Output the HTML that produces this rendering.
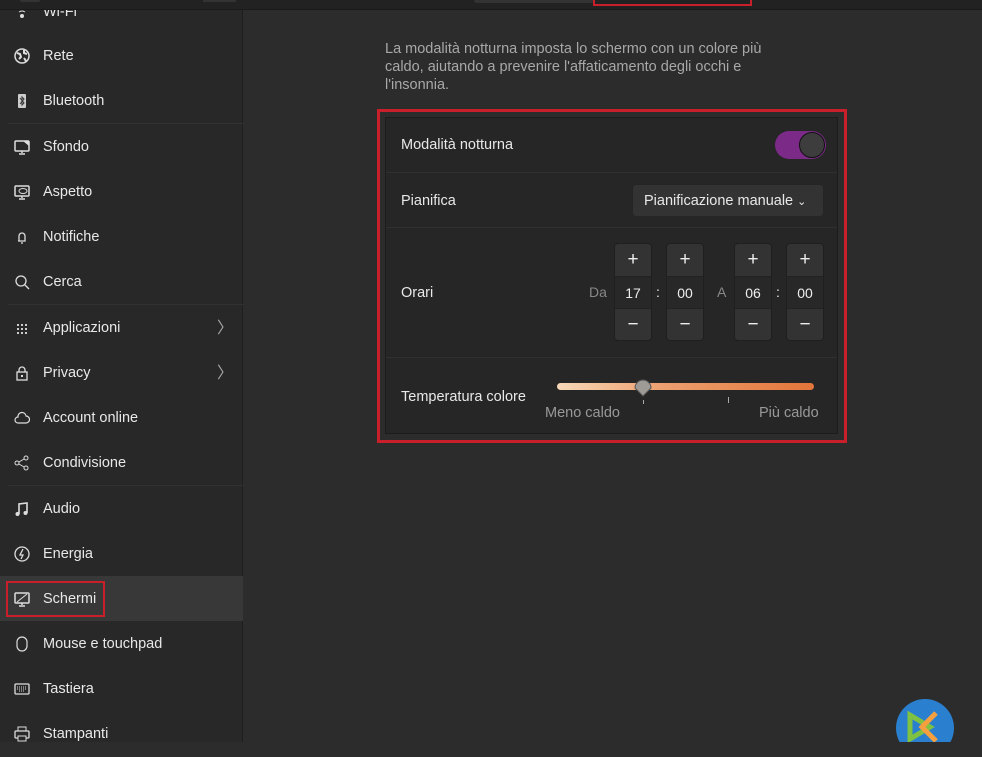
<!DOCTYPE html>
<html><head><meta charset="utf-8">
<style>
*{margin:0;padding:0;box-sizing:border-box}
body{width:982px;height:742px;overflow:hidden;background:#2c2c2c;font-family:"Liberation Sans",sans-serif;font-size:14px;color:#e8e8e8;position:relative}
.abs{position:absolute}
#top{left:0;top:0;width:982px;height:10px;background:#222;border-bottom:1px solid #1a1a1a;z-index:2}
#side{left:0;top:10px;width:243px;height:732px;background:#282828;border-right:1px solid #1e1e1e}
.it{position:absolute;left:0;width:243px;height:45px;line-height:45px;font-size:14.5px}
.it span{position:absolute;left:43px;top:0}
.it svg{position:absolute;left:14px;top:14px}
.sep{position:absolute;left:8px;width:235px;height:1px;background:#323232}
.chev{position:absolute;left:217px;top:0;color:#aaa;font-size:16px}
#card{left:385px;top:117px;width:453px;height:317px;background:#262626;border:1px solid #1c1c1c}
.lbl{position:absolute;left:15px;font-size:14.5px}
.rs{position:absolute;left:0;width:451px;height:1px;background:#303030}
.sp{position:absolute;top:125px;width:38px;height:98px;border-radius:4px;background:#333;border:1px solid #1f1f1f;overflow:hidden}
.sp div{height:32px;line-height:32px;text-align:center;color:#eee}
.sp .v{background:#282828;height:33px;line-height:33px;font-size:14px;border-top:1px solid #222;border-bottom:1px solid #222}
.sp .b{font-size:19px}
</style></head><body>
<div id="top" class="abs"></div>
<div class="abs" style="left:20px;top:0;width:20px;height:2px;background:#333;border-radius:0 0 3px 3px;z-index:3"></div>
<div class="abs" style="left:203px;top:0;width:33px;height:2px;background:#333;z-index:3"></div>
<div class="abs" style="left:474px;top:0;width:120px;height:3px;background:#333;border-radius:0 0 4px 4px;z-index:3"></div>
<div class="abs" style="left:593px;top:0;width:159px;height:6px;border:2px solid #c8202a;border-top:none;z-index:3"></div>
<div id="side" class="abs">
 <div class="it" style="top:-20px"><svg width="16" height="16"><circle cx="8" cy="12" r="2" fill="#ddd"/><path d="M5 8 Q8 6 11 8" stroke="#ddd" fill="none"/></svg><span>Wi-Fi</span></div>
 <div class="it" style="top:24px"><svg width="16" height="16"><circle cx="8" cy="8" r="7" stroke="#ddd" stroke-width="1.5" fill="none"/><path d="M3 5 l3 1 1 3 -2 2 M10 2 l0 3 3 1 M10 10 l2 3" stroke="#ddd" stroke-width="2" fill="none"/></svg><span>Rete</span></div>
 <div class="it" style="top:69px"><svg width="16" height="16"><rect x="4" y="1" width="8" height="14" rx="1" fill="#ccc"/><path d="M6 5 l4 5 -2 2 0-8 2 2 -4 5" stroke="#333" fill="none"/></svg><span>Bluetooth</span></div>
 <div class="sep" style="top:113px"></div>
 <div class="it" style="top:115px"><svg width="16" height="16"><rect x="1" y="2" width="14" height="10" rx="1" stroke="#ddd" stroke-width="1.5" fill="none"/><path d="M9 2 h6 v5z" fill="#ddd"/><path d="M8 12v2M5 15h6" stroke="#ddd" stroke-width="1.5"/></svg><span>Sfondo</span></div>
 <div class="it" style="top:160px"><svg width="16" height="16"><rect x="1" y="2" width="14" height="10" rx="1" stroke="#ddd" stroke-width="1.5" fill="none"/><ellipse cx="9" cy="7" rx="4" ry="2.5" stroke="#ddd" fill="none"/><path d="M8 12v2M5 15h6" stroke="#ddd" stroke-width="1.5"/></svg><span>Aspetto</span></div>
 <div class="it" style="top:205px"><svg width="16" height="16"><path d="M5 12 V7 a3 3 0 0 1 6 0 V12 H4 M7 14 h2" stroke="#ddd" stroke-width="1.3" fill="none"/></svg><span>Notifiche</span></div>
 <div class="it" style="top:250px"><svg width="16" height="16"><circle cx="7" cy="7" r="5" stroke="#ddd" stroke-width="1.3" fill="none"/><path d="M11 11 l4 4" stroke="#ddd" stroke-width="1.3"/></svg><span>Cerca</span></div>
 <div class="sep" style="top:294px"></div>
 <div class="it" style="top:296px"><svg width="16" height="16" fill="#ccc"><rect x="3" y="4" width="2" height="2"/><rect x="7" y="4" width="2" height="2"/><rect x="11" y="4" width="2" height="2"/><rect x="3" y="8" width="2" height="2"/><rect x="7" y="8" width="2" height="2"/><rect x="11" y="8" width="2" height="2"/><rect x="3" y="12" width="2" height="2"/><rect x="7" y="12" width="2" height="2"/><rect x="11" y="12" width="2" height="2"/></svg><span>Applicazioni</span><div class="chev">〉</div></div>
 <div class="it" style="top:341px"><svg width="16" height="16"><rect x="3" y="7" width="10" height="8" stroke="#ddd" stroke-width="1.3" fill="none"/><path d="M5 7 V5 a3 3 0 0 1 6 0 V7" stroke="#ddd" stroke-width="1.3" fill="none"/><rect x="7" y="10" width="2" height="2" fill="#ddd"/></svg><span>Privacy</span><div class="chev">〉</div></div>
 <div class="it" style="top:386px"><svg width="16" height="16"><path d="M4 13 a3 3 0 0 1 0-6 a4 4 0 0 1 8-1 a3.5 3.5 0 0 1 0 7z" stroke="#ddd" stroke-width="1.2" fill="none"/></svg><span>Account online</span></div>
 <div class="it" style="top:431px"><svg width="16" height="16"><circle cx="3" cy="8" r="2" stroke="#ddd" fill="none"/><circle cx="12" cy="3" r="2" stroke="#ddd" fill="none"/><circle cx="12" cy="13" r="2" stroke="#ddd" fill="none"/><path d="M5 7 L10 4 M5 9 L10 12" stroke="#ddd"/></svg><span>Condivisione</span></div>
 <div class="sep" style="top:475px"></div>
 <div class="it" style="top:477px"><svg width="16" height="16"><path d="M5 13 V3 L13 2 V12" stroke="#ddd" stroke-width="1.6" fill="none"/><circle cx="3.5" cy="13" r="2" fill="#ddd"/><circle cx="11.5" cy="12" r="2" fill="#ddd"/></svg><span>Audio</span></div>
 <div class="it" style="top:522px"><svg width="16" height="16"><circle cx="8" cy="8" r="7" stroke="#ddd" stroke-width="1.3" fill="none"/><path d="M9 3 L6 9 H9 L7 13" stroke="#ddd" stroke-width="1.3" fill="none"/></svg><span>Energia</span></div>
 <div class="abs" style="left:0;top:566px;width:243px;height:45px;background:#383838"></div>
 <div class="it" style="top:567px"><svg width="16" height="16"><rect x="1" y="2" width="14" height="10" rx="1" stroke="#ddd" stroke-width="1.5" fill="none"/><path d="M3 11 L13 3" stroke="#ddd"/><path d="M8 12v2M5 15h6" stroke="#ddd" stroke-width="1.5"/></svg><span>Schermi</span></div>
 <div class="abs" style="left:6px;top:571px;width:99px;height:36px;border:2px solid #c8202a"></div>
 <div class="it" style="top:612px"><svg width="16" height="16"><rect x="3" y="1" width="10" height="14" rx="5" stroke="#ddd" stroke-width="1.2" fill="none"/></svg><span>Mouse e touchpad</span></div>
 <div class="it" style="top:657px"><svg width="16" height="16"><rect x="1" y="3" width="14" height="10" rx="1" stroke="#ddd" stroke-width="1.3" fill="none"/><path d="M3 6h10M3 8h10M5 10h6" stroke="#ddd" stroke-dasharray="1 1"/></svg><span>Tastiera</span></div>
 <div class="it" style="top:702px"><svg width="16" height="16"><rect x="4" y="1" width="8" height="4" stroke="#ddd" fill="none"/><rect x="1" y="5" width="14" height="7" rx="1" stroke="#ddd" stroke-width="1.3" fill="none"/><rect x="4" y="10" width="8" height="5" stroke="#ddd" fill="#282828"/></svg><span>Stampanti</span></div>
</div>
<div class="abs" style="left:385px;top:40px;width:405px;color:#a8a8a8;font-size:14.5px;line-height:18px">La modalità notturna imposta lo schermo con un colore più caldo, aiutando a prevenire l'affaticamento degli occhi e l'insonnia.</div>
<div class="abs" style="left:377px;top:109px;width:470px;height:334px;border:3px solid #c8202a"></div>
<div id="card" class="abs">
 <div class="lbl" style="top:19px">Modalità notturna</div>
 <div class="abs" style="left:389px;top:13px;width:51px;height:28px;border-radius:14px;background:#7b2a87"></div>
 <div class="abs" style="left:413px;top:14px;width:26px;height:26px;border-radius:13px;background:#3d3d3d;border:1px solid #111"></div>
 <div class="rs" style="top:54px"></div>
 <div class="lbl" style="top:75px">Pianifica</div>
 <div class="abs" style="left:246px;top:66px;width:192px;height:33px;border-radius:4px;background:#333;border:1px solid #252525;line-height:32px;padding-left:11px;font-size:14.5px">Pianificazione manuale <span style="font-size:11px">&#8964;</span></div>
 <div class="rs" style="top:109px"></div>
 <div class="lbl" style="top:167px">Orari</div>
 <div class="abs" style="left:203px;top:166px;color:#888">Da</div>
 <div class="sp" style="left:228px"><div class="b">+</div><div class="v">17</div><div class="b">−</div></div>
 <div class="abs" style="left:270px;top:166px">:</div>
 <div class="sp" style="left:280px"><div class="b">+</div><div class="v">00</div><div class="b">−</div></div>
 <div class="abs" style="left:331px;top:166px;color:#888">A</div>
 <div class="sp" style="left:348px"><div class="b">+</div><div class="v">06</div><div class="b">−</div></div>
 <div class="abs" style="left:390px;top:166px">:</div>
 <div class="sp" style="left:400px"><div class="b">+</div><div class="v">00</div><div class="b">−</div></div>
 <div class="rs" style="top:239px"></div>
 <div class="lbl" style="top:271px">Temperatura colore</div>
 <div class="abs" style="left:171px;top:265px;width:257px;height:7px;border-radius:4px;background:linear-gradient(90deg,#f6d8b8,#eda070 40%,#e2753a)"></div>
 <svg class="abs" style="left:247px;top:258px" width="20" height="24"><path d="M10 20 L2 12 A8 8 0 1 1 18 12 Z" fill="#9e9a96" stroke="#555"/></svg>
 <div class="abs" style="left:257px;top:282px;width:1px;height:4px;background:#aaa"></div>
 <div class="abs" style="left:342px;top:279px;width:1px;height:6px;background:#aaa"></div>
 <div class="abs" style="left:159px;top:287px;color:#999;font-size:14.5px">Meno caldo</div>
 <div class="abs" style="left:373px;top:287px;color:#999;font-size:14.5px">Più caldo</div>
</div>
<svg class="abs" style="left:896px;top:699px" width="60" height="43"><circle cx="29" cy="29" r="29" fill="#2a7fcf"/><path d="M14 16 L34 28 L14 40Z" fill="none" stroke="#7fc242" stroke-width="5"/><path d="M40 14 L26 28 L40 42" fill="none" stroke="#f4a040" stroke-width="5"/></svg>
</body></html>
